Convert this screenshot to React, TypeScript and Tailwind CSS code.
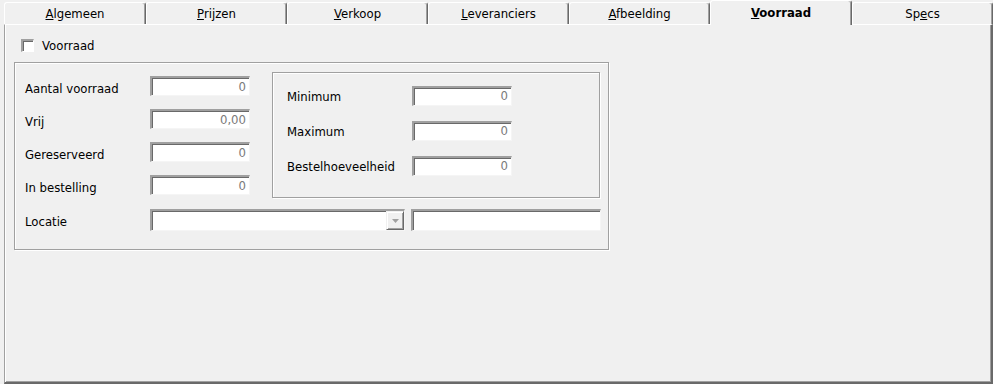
import React from 'react';

const tabs = [
  { key: 'A', rest: 'lgemeen', w: 'w-[142px]' },
  { key: 'P', rest: 'rijzen', w: 'w-[141px]' },
  { key: 'V', rest: 'erkoop', w: 'w-[141px]' },
  { key: 'L', rest: 'everanciers', w: 'w-[141px]' },
  { key: 'A', rest: 'fbeelding', w: 'w-[141px]' },
  { key: 'V', rest: 'oorraad', w: 'w-[142px]', active: true },
];

function NumField({ value }: { value: string }) {
  return (
    <div className="flex h-[20px] w-[100px] items-center justify-end border-l-2 border-t-2 border-b border-r border-l-[#a0a0a0] border-t-[#a0a0a0] border-b-[#f5f5f5] border-r-[#f5f5f5] bg-white pr-[3px] pt-[2px] text-[#7a7a7a] shadow-[inset_1px_1px_0_#696969]">
      {value}
    </div>
  );
}

function Row({ label, value }: { label: string; value: string }) {
  return (
    <div className="flex h-[20px] items-center">
      <span className="w-[125px] pt-[8px]">{label}</span>
      <NumField value={value} />
    </div>
  );
}

export default function App() {
  return (
    <div className="flex h-[384px] w-[993px] flex-col bg-[#f0f0f0] font-['DejaVu_Sans',sans-serif] text-[11.7px] text-black">
      {/* Tabs */}
      <div className="flex h-[24px] items-end pl-[4px]">
        {tabs.map((t, i) =>
          t.active ? (
            <div
              key={i}
              className={`relative z-10 -mb-px flex h-[25px] items-center justify-center rounded-t-[3px] border-l border-t border-r border-l-white border-t-white border-r-[#696969] bg-[#f0f0f0] pt-[2px] font-bold shadow-[inset_-1px_0_0_#a0a0a0] ${t.w}`}
            >
              <span>
                <u>{t.key}</u>
                {t.rest}
              </span>
            </div>
          ) : (
            <div
              key={i}
              className={`flex h-[22px] items-center justify-center rounded-t-[3px] border-l border-t border-r border-l-white border-t-white border-r-[#696969] pt-[2px] shadow-[inset_-1px_0_0_#a0a0a0] ${t.w}`}
            >
              <span>
                <u>{t.key}</u>
                {t.rest}
              </span>
            </div>
          )
        )}
        <div className="flex h-[22px] flex-1 items-center justify-center rounded-t-[3px] border-l border-t border-r border-l-white border-t-white border-r-[#696969] pt-[2px] shadow-[inset_-1px_0_0_#a0a0a0]">
          <span>
            Sp<u>e</u>cs
          </span>
        </div>
      </div>

      {/* Panel */}
      <div className="ml-[4px] flex-1 border-l border-t border-r-2 border-b-2 border-l-[#a0a0a0] border-t-white border-r-[#696969] border-b-[#696969] pl-[9px] pt-[14px] shadow-[inset_1px_0_0_white,inset_-1px_-1px_0_#a0a0a0]">
        <div className="flex h-[13px] items-center pl-[7px]">
          <div className="h-[13px] w-[13px] border-l-2 border-t-2 border-b border-r border-l-[#a0a0a0] border-t-[#a0a0a0] border-b-white border-r-white bg-white shadow-[inset_1px_1px_0_#696969]" />
          <span className="ml-[8px] pt-[2px]">Voorraad</span>
        </div>

        {/* Stock frame */}
        <div className="mt-[10px] h-[188px] w-[595px] border border-[#a0a0a0] pl-[10px] shadow-[inset_1px_1px_0_white,1px_1px_0_white]">
          <div className="flex">
            <div className="mt-[13px] flex flex-col gap-[13px]">
              <Row label="Aantal voorraad" value="0" />
              <Row label="Vrij" value="0,00" />
              <Row label="Gereserveerd" value="0" />
              <Row label="In bestelling" value="0" />
            </div>

            <div className="ml-[22px] mt-[9px] flex h-[126px] w-[328px] flex-col gap-[14px] border border-[#a0a0a0] pl-[14px] pt-[12px] shadow-[inset_1px_1px_0_white,1px_1px_0_white]">
              <div className="flex h-[21px] items-center">
                <span className="w-[125px] pt-[4px]">Minimum</span>
                <NumField value="0" />
              </div>
              <div className="flex h-[21px] items-center">
                <span className="w-[125px] pt-[4px]">Maximum</span>
                <NumField value="0" />
              </div>
              <div className="flex h-[21px] items-center">
                <span className="w-[125px] pt-[4px]">Bestelhoeveelheid</span>
                <NumField value="0" />
              </div>
            </div>
          </div>

          <div className="mt-[11px] flex h-[22px] items-center">
            <span className="w-[125px] pt-[6px]">Locatie</span>
            <div className="flex h-[22px] w-[255px] justify-end border-l-2 border-t-2 border-b border-r border-l-[#a0a0a0] border-t-[#a0a0a0] border-b-[#f5f5f5] border-r-[#f5f5f5] bg-white shadow-[inset_1px_1px_0_#696969]">
              <div className="flex h-[19px] w-[18px] items-center justify-center border border-t-[#f0f0f0] border-l-[#f0f0f0] border-b-[#696969] border-r-[#696969] bg-[#f0f0f0] shadow-[inset_1px_1px_0_white,inset_-1px_-1px_0_#a0a0a0]">
                <svg width="7" height="4" viewBox="0 0 7 4">
                  <path d="M0 0h7L3.5 4z" fill="#a0a0a0" />
                </svg>
              </div>
            </div>
            <div className="ml-[6px] h-[22px] w-[190px] border-l-2 border-t-2 border-b border-r border-l-[#a0a0a0] border-t-[#a0a0a0] border-b-[#f5f5f5] border-r-[#f5f5f5] bg-white shadow-[inset_1px_1px_0_#696969]" />
          </div>
        </div>
      </div>
    </div>
  );
}
